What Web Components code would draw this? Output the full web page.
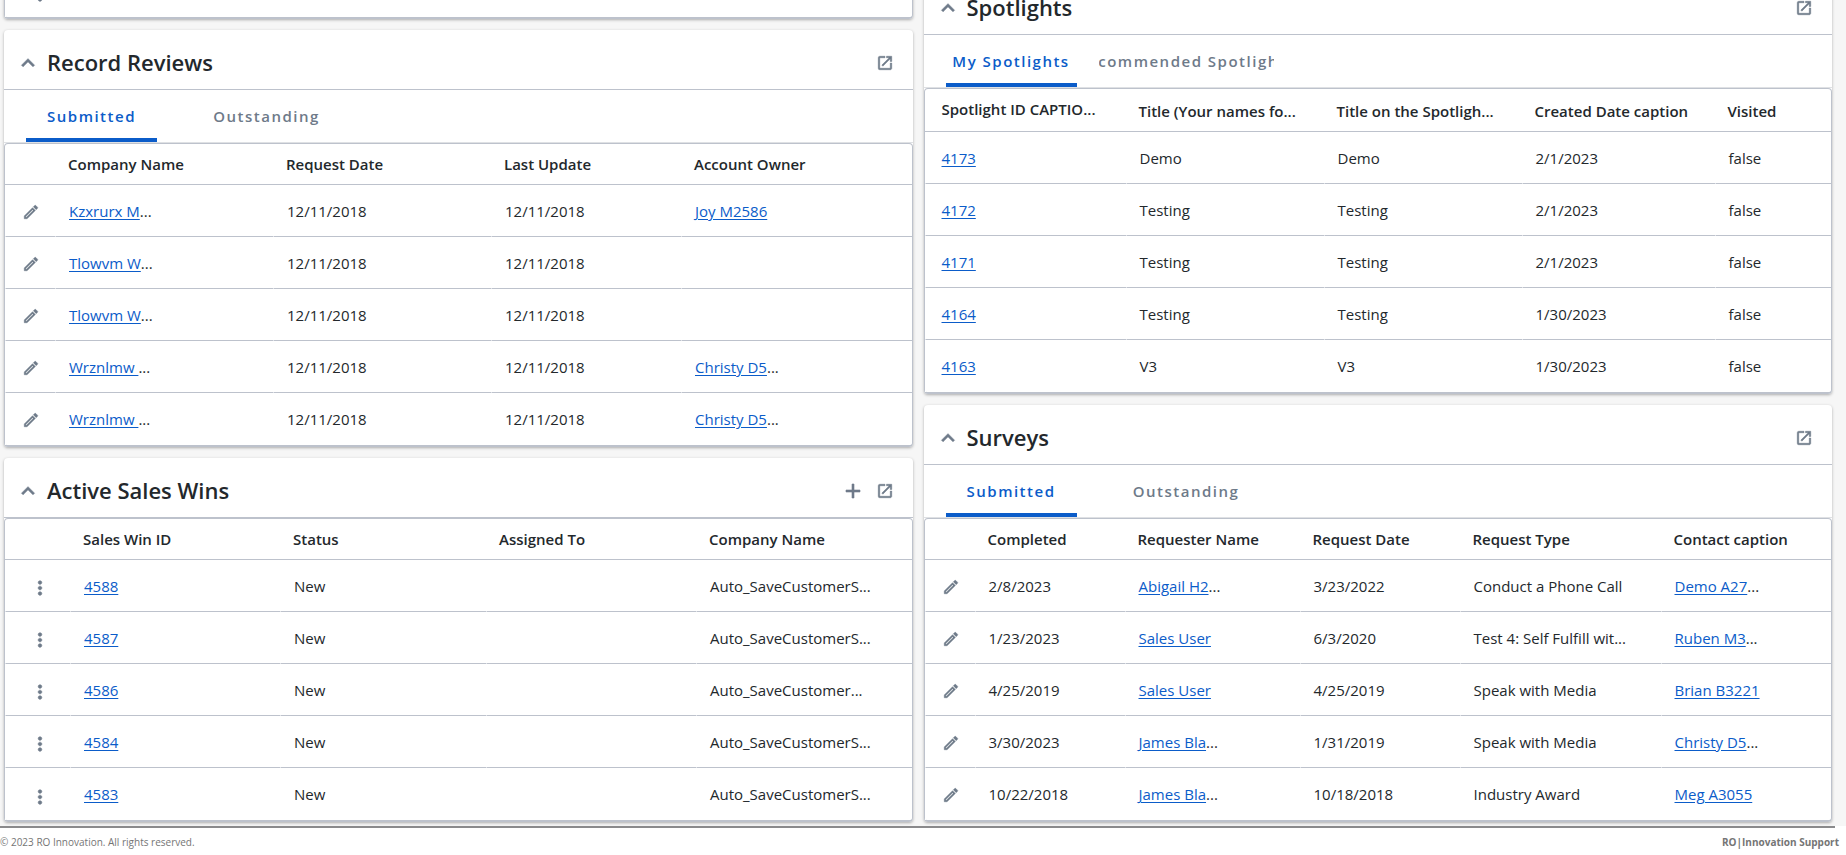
<!DOCTYPE html>
<html lang="en">
<head>
<meta charset="utf-8">
<title>RO Innovation</title>
<style>
    html, body{
        margin: 0;
        background: #ffffff;
    }
    body{
        overflow: hidden;
        font-family: "Open Sans", "Noto Sans", sans-serif;
        font-size: 15px;
        color: #23282c;
        --line: #bdc2cc;
        --link: #0b5cc9;
        --muted: #6e7a89;
    }
</style>
</head>
<body>

<dash-board>
    <dash-panel slot="left">
        <data-grid source="previous"></data-grid>
    </dash-panel>
    <dash-panel slot="left" heading="Record Reviews">
        <tab-bar tabs="Submitted,Outstanding"></tab-bar>
        <data-grid source="reviews"></data-grid>
    </dash-panel>
    <dash-panel slot="left" heading="Active Sales Wins" add>
        <data-grid source="wins"></data-grid>
    </dash-panel>
    <dash-panel slot="right" heading="Spotlights">
        <tab-bar tabs="My Spotlights,Recommended Spotlights"></tab-bar>
        <data-grid source="spotlights"></data-grid>
    </dash-panel>
    <dash-panel slot="right" heading="Surveys">
        <tab-bar tabs="Submitted,Outstanding"></tab-bar>
        <data-grid source="surveys"></data-grid>
    </dash-panel>
</dash-board>
<page-footer></page-footer>

<script>
const ICONS = {
    up: 'M7.41 15.41 12 10.83l4.59 4.58L18 14l-6-6-6 6z',
    open: 'M19 19H5V5h7V3H5a2 2 0 0 0-2 2v14a2 2 0 0 0 2 2h14c1.1 0 2-.9 2-2v-7h-2v7zM14 3v2h3.59l-9.83 9.83 1.41 1.41L19 6.41V10h2V3h-7z',
    plus: 'M19 13h-6v6h-2v-6H5v-2h6V5h2v6h6v2z',
    edit: 'M3 17.25V21h3.75L17.81 9.94l-3.75-3.75L3 17.25zM5.92 19H5v-.92l9.06-9.06.92.92L5.92 19zM20.71 5.63l-2.34-2.34c-.2-.2-.45-.29-.71-.29s-.51.1-.7.29l-1.83 1.83 3.75 3.75 1.83-1.83c.39-.39.39-1.02 0-1.41z',
    more: 'M12 8c1.1 0 2-.9 2-2s-.9-2-2-2-2 .9-2 2 .9 2 2 2zm0 2c-1.1 0-2 .9-2 2s.9 2 2 2 2-.9 2-2-.9-2-2-2zm0 6c-1.1 0-2 .9-2 2s.9 2 2 2 2-.9 2-2-.9-2-2-2z'
};

const link = (text, rest = '') => `<a href="#">${text}</a>${rest}`;

const GRIDS = {
    previous: {
        icon: 'more',
        widths: [65, 93, 183, 179, 209, 178],
        rows: [['', '', '', '', '']]
    },
    reviews: {
        icon: 'edit',
        widths: [50, 218, 218, 190, 231],
        head: ['Company Name', 'Request Date', 'Last Update', 'Account Owner'],
        rows: [
            [link('Kzxrurx M', '...'), '12/11/2018', '12/11/2018', link('Joy M2586')],
            [link('Tlowvm W', '...'), '12/11/2018', '12/11/2018', ''],
            [link('Tlowvm W', '...'), '12/11/2018', '12/11/2018', ''],
            [link('Wrznlmw ', '...'), '12/11/2018', '12/11/2018', link('Christy D5', '...')],
            [link('Wrznlmw ', '...'), '12/11/2018', '12/11/2018', link('Christy D5', '...')]
        ]
    },
    wins: {
        icon: 'more',
        widths: [65, 210, 206, 210, 216],
        head: ['Sales Win ID', 'Status', 'Assigned To', 'Company Name'],
        rows: [
            [link('4588'), 'New', '', 'Auto_SaveCustomerS...'],
            [link('4587'), 'New', '', 'Auto_SaveCustomerS...'],
            [link('4586'), 'New', '', 'Auto_SaveCustomer...'],
            [link('4584'), 'New', '', 'Auto_SaveCustomerS...'],
            [link('4583'), 'New', '', 'Auto_SaveCustomerS...']
        ]
    },
    spotlights: {
        widths: [201, 198, 198, 193, 117],
        head: ['Spotlight ID CAPTIO...', 'Title (Your names fo...', 'Title on the Spotligh...', 'Created Date caption', 'Visited'],
        rows: [
            [link('4173'), 'Demo', 'Demo', '2/1/2023', 'false'],
            [link('4172'), 'Testing', 'Testing', '2/1/2023', 'false'],
            [link('4171'), 'Testing', 'Testing', '2/1/2023', 'false'],
            [link('4164'), 'Testing', 'Testing', '1/30/2023', 'false'],
            [link('4163'), 'V3', 'V3', '1/30/2023', 'false']
        ]
    },
    surveys: {
        icon: 'edit',
        widths: [50, 150, 175, 160, 201, 171],
        head: ['Completed', 'Requester Name', 'Request Date', 'Request Type', 'Contact caption'],
        rows: [
            ['2/8/2023', link('Abigail H2', '...'), '3/23/2022', 'Conduct a Phone Call', link('Demo A27', '...')],
            ['1/23/2023', link('Sales User'), '6/3/2020', 'Test 4: Self Fulfill wit...', link('Ruben M3', '...')],
            ['4/25/2019', link('Sales User'), '4/25/2019', 'Speak with Media', link('Brian B3221')],
            ['3/30/2023', link('James Bla', '...'), '1/31/2019', 'Speak with Media', link('Christy D5', '...')],
            ['10/22/2018', link('James Bla', '...'), '10/18/2018', 'Industry Award', link('Meg A3055')]
        ]
    }
};

class IconButton extends HTMLElement{

    connectedCallback(){
        const size = this.getAttribute('size') || 18;
        this.attachShadow({mode: 'open'}).innerHTML = `
            <style>
                :host{
                    display: inline-flex;
                    vertical-align: middle;
                }
                button{
                    display: flex;
                    margin: 0;
                    padding: 0;
                    border: 0;
                    background: none;
                    color: var(--muted);
                    cursor: pointer;
                }
                svg{
                    fill: currentColor;
                    stroke: currentColor;
                    stroke-width: 0.6;
                }
            </style>
            <button type="button" aria-label="${this.getAttribute('label')}">
                <svg width="${size}" height="${size}" viewBox="0 0 24 24"><path d="${ICONS[this.getAttribute('name')]}"/></svg>
            </button>`;
    }

}

class DashBoard extends HTMLElement{

    connectedCallback(){
        // the board sits scrolled up, both columns end on the same line
        this.attachShadow({mode: 'open'}).innerHTML = `
            <style>
                :host{
                    display: grid;
                    grid-template-columns: minmax(0, 1fr) minmax(0, 1fr);
                    align-items: end;
                    gap: 11px;
                    margin-top: -36px;
                    padding: 0 14px 4px 4px;
                    background: #f6f6f6;
                }
                div{
                    display: flex;
                    flex-direction: column;
                    gap: 11px;
                }
            </style>
            <div><slot name="left"></slot></div>
            <div><slot name="right"></slot></div>`;
    }

}

class DashPanel extends HTMLElement{

    connectedCallback(){
        this.attachShadow({mode: 'open'}).innerHTML = `
            <style>
                :host{
                    display: block;
                    border-radius: 4px;
                    background: #ffffff;
                    box-shadow: 0 1px 3px rgba(0, 0, 0, 0.3);
                }
                header{
                    display: flex;
                    align-items: center;
                    gap: 6px;
                    box-sizing: border-box;
                    height: 60px;
                    padding: 7px 19px 0 11px;
                    border-bottom: 1px solid var(--line);
                }
                h2{
                    flex: 1;
                    margin: 0;
                    padding-bottom: 2px;
                    font-size: 22px;
                    line-height: 30px;
                    font-weight: 600;
                }
                .tools{
                    display: flex;
                    align-items: center;
                    gap: 11px;
                }
            </style>
            ${this.hasAttribute('heading') ? this.header() : ''}
            <slot></slot>`;
    }

    header(){
        return `
            <header>
                <icon-button name="up" size="26" label="Collapse"></icon-button>
                <h2>${this.getAttribute('heading')}</h2>
                <div class="tools">
                    ${this.hasAttribute('add') ? '<icon-button name="plus" size="24" label="Add"></icon-button>' : ''}
                    <icon-button name="open" label="Open"></icon-button>
                </div>
            </header>`;
    }

}

class TabBar extends HTMLElement{

    connectedCallback(){
        const tabs = this.getAttribute('tabs').split(',');
        this.attachShadow({mode: 'open'}).innerHTML = `
            <style>
                :host{
                    display: flex;
                    gap: 22px;
                    height: 52px;
                    padding-left: 22px;
                    border-bottom: 1px solid #dfe1e4;
                }
                button{
                    display: flex;
                    align-items: center;
                    justify-content: center;
                    width: 175px;
                    padding: 4px 0 0;
                    border: 0;
                    border-bottom: 4px solid transparent;
                    background: none;
                    overflow: hidden;
                    font: 600 15px/20px "Open Sans", sans-serif;
                    letter-spacing: 1.5px;
                    color: var(--muted);
                    cursor: pointer;
                }
                button[aria-selected=true]{
                    width: 131px;
                    border-color: var(--link);
                    color: var(--link);
                }
                span{
                    flex: none;
                    white-space: nowrap;
                }
            </style>
            ${tabs.map((tab, i) => `<button type="button" role="tab" aria-selected="${i === 0}"><span>${tab}</span></button>`).join('')}`;
    }

}

class DataGrid extends HTMLElement{

    connectedCallback(){
        const grid = GRIDS[this.getAttribute('source')];
        const iconCell = grid.icon ? this.iconCell(grid.icon) : '';
        this.attachShadow({mode: 'open'}).innerHTML = `
            <style>
                :host{
                    display: block;
                    border: 1px solid var(--line);
                    border-bottom-width: 2px;
                    border-radius: 4px;
                }
                table{
                    width: 100%;
                    table-layout: fixed;
                    border-spacing: 0;
                    line-height: 20px;
                }
                th, td{
                    box-sizing: border-box;
                    padding: 0 0 0 13px;
                    text-align: left;
                    white-space: nowrap;
                    border-bottom: 1px solid var(--line);
                }
                th{
                    height: 41px;
                    font-weight: 600;
                }
                td{
                    height: 52px;
                    border-left: 1px solid #ffffff;
                }
                tr:last-child td{
                    border-bottom: 0;
                }
                .plain th{
                    height: 43px;
                    padding-top: 2px;
                }
                .plain th:first-child{
                    padding: 0 0 2px 17px;
                }
                .plain td:first-child{
                    padding-left: 16px;
                }
                .edit{
                    padding-left: 16px;
                }
                .more{
                    padding: 5px 0 0 23px;
                }
                a{
                    color: var(--link);
                    text-underline-offset: 2px;
                }
            </style>
            <table class="${grid.icon ? '' : 'plain'}">
                <colgroup>${grid.widths.map(width => `<col style="width: ${width}px">`).join('')}</colgroup>
                ${grid.head ? `<thead><tr>${grid.icon ? '<th></th>' : ''}${grid.head.map(text => `<th scope="col">${text}</th>`).join('')}</tr></thead>` : ''}
                <tbody>
                    ${grid.rows.map(row => `<tr>${iconCell}${row.map(cell => `<td>${cell}</td>`).join('')}</tr>`).join('')}
                </tbody>
            </table>`;
    }

    iconCell(icon){
        const size = icon === 'more' ? 22 : 18;
        return `<td class="${icon}"><icon-button name="${icon}" size="${size}" label="${icon}"></icon-button></td>`;
    }

}

class PageFooter extends HTMLElement{

    connectedCallback(){
        this.attachShadow({mode: 'open'}).innerHTML = `
            <style>
                :host{
                    display: block;
                    font-size: 10px;
                    line-height: 14px;
                    color: #757575;
                }
                hr{
                    height: 2px;
                    margin: 0 11px 0 0;
                    border: 0;
                    background: #8a8a8c;
                }
                footer{
                    display: flex;
                    justify-content: space-between;
                    padding: 7px 7px 0 0;
                }
                a{
                    font-weight: 700;
                    color: inherit;
                    text-decoration: none;
                }
            </style>
            <hr>
            <footer>
                <span>© 2023 RO Innovation. All rights reserved.</span>
                <a href="#">RO|Innovation Support</a>
            </footer>`;
    }

}

customElements.define('icon-button', IconButton);
customElements.define('dash-board', DashBoard);
customElements.define('dash-panel', DashPanel);
customElements.define('tab-bar', TabBar);
customElements.define('data-grid', DataGrid);
customElements.define('page-footer', PageFooter);
</script>
</body>
</html>
